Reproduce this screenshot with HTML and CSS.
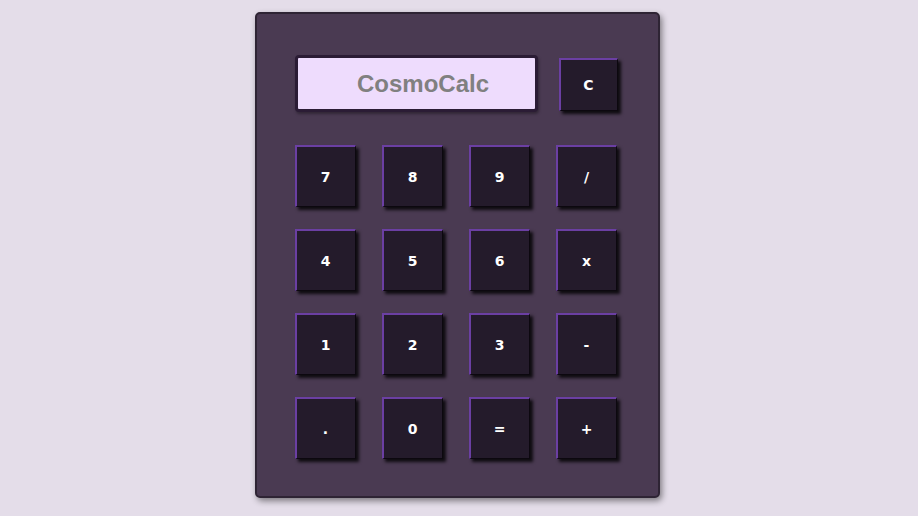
FILE: index.html
```html
<!DOCTYPE html>
<html>
<head>
<meta charset="utf-8">
<link rel="stylesheet" href="styles.css">
</head>
<body>
<div class="calc">
  <div class="top">
    <div class="display">CosmoCalc</div>
    <button class="key key-clear">C</button>
  </div>
  <div class="keys">
    <button class="key">7</button>
    <button class="key">8</button>
    <button class="key">9</button>
    <button class="key">/</button>
    <button class="key">4</button>
    <button class="key">5</button>
    <button class="key">6</button>
    <button class="key">x</button>
    <button class="key">1</button>
    <button class="key">2</button>
    <button class="key">3</button>
    <button class="key">-</button>
    <button class="key">.</button>
    <button class="key">0</button>
    <button class="key">=</button>
    <button class="key">+</button>
  </div>
</div>
</body>
</html>
```
FILE: styles.css
```css
html, body {
  margin: 0;
  padding: 0;
}
body {
  background: #e4dde9;
  width: 918px;
  height: 516px;
  overflow: hidden;
  box-sizing: border-box;
  padding-right: 4px;
  display: flex;
  justify-content: center;
  align-items: flex-start;
}
.calc {
  box-sizing: border-box;
  margin-top: 12px;
  width: 405px;
  height: 486px;
  background: #4a3a52;
  border: 2px solid #2e2434;
  border-radius: 5px;
  box-shadow: 2px 3px 6px rgba(0, 0, 0, 0.45);
  padding: 41px 40px 0 38px;
}
.top {
  display: flex;
  align-items: flex-start;
  gap: 21px;
  height: 90px;
}
.display {
  box-sizing: border-box;
  width: 243px;
  height: 57px;
  background: #eedcfd;
  border: 3px solid #2b1c35;
  border-radius: 4px;
  box-shadow: 1px 2px 3px rgba(0, 0, 0, 0.35);
  color: #808080;
  font-family: "Liberation Sans", Arial, sans-serif;
  font-weight: bold;
  font-size: 24px;
  line-height: 51px;
  text-align: center;
  padding-left: 14px;
}
.keys {
  display: grid;
  grid-template-columns: repeat(4, 61px);
  grid-auto-rows: 62px;
  column-gap: 26px;
  row-gap: 22px;
}
.key {
  box-sizing: border-box;
  width: 61px;
  height: 62px;
  padding: 0;
  margin: 0;
  background: #241b2b;
  color: #ffffff;
  font-family: "DejaVu Sans", Verdana, sans-serif;
  font-weight: bold;
  font-size: 14px;
  border-top: 2px solid #6b3fa3;
  border-left: 2px solid #6b3fa3;
  border-right: 1px solid #0c080f;
  border-bottom: 1px solid #0c080f;
  box-shadow: 3px 3px 3px rgba(0, 0, 0, 0.8);
}
.key-clear {
  width: 59px;
  height: 53px;
  margin-top: 3px;
}
```
